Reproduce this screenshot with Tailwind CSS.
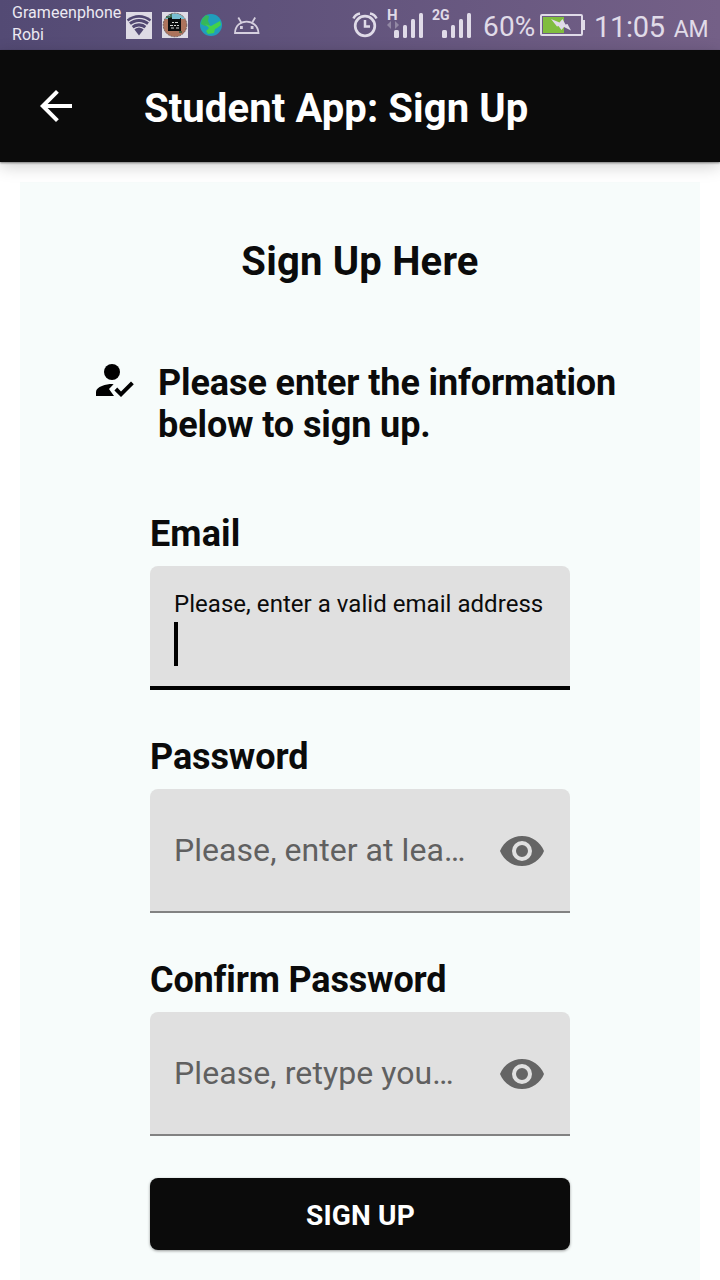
<!DOCTYPE html>
<html lang="en">
<head>
<meta charset="utf-8">
<title>Student App: Sign Up</title>
<script src="https://cdn.jsdelivr.net/npm/@tailwindcss/browser@4"></script>
</head>
<body class="h-[1280px] w-[720px] overflow-hidden bg-white font-['Roboto','Liberation_Sans',sans-serif] text-[#0b0b0b]">
<div class="flex h-full flex-col">
  <!-- Status bar -->
  <div class="flex h-[50px] shrink-0 items-start bg-linear-to-r from-[#534a74] to-[#746087] text-[#e0dbe8]">
    <div class="ml-3 mt-[2px] w-[114px] whitespace-nowrap text-[16px] leading-[22px] tracking-[0.05px] text-[#ece9f2]"><p>Grameenphone</p><p>Robi</p></div>
    <!-- Wi-Fi -->
    <svg class="mt-3 h-[27px] w-[26px] shrink-0" viewBox="0 0 26 27"><path fill="#dedbe5" d="M0 0h26v27H0z"/><path fill="#514872" d="M.8 7.500C8 1.500 18 1.500 25.200 7.500L13 23.500z"/><g fill="none" stroke="#dedbe5" stroke-width="1.300"><path d="M2 10.500c6.500-5.500 15.500-5.500 22 0M4.500 14c5-4.500 12-4.500 17 0M7 17.600c3.600-3.300 8.400-3.300 12 0"/></g></svg>
    <!-- Game -->
    <svg class="ml-[10px] mt-3 size-[26px] shrink-0" viewBox="0 0 26 26"><path fill="#dedbe5" d="M0 0h26v26H0z"/><circle cx="13" cy="13" r="11.800" fill="#ad735c" stroke="#5f514f" stroke-width=".8" stroke-dasharray="2 1"/><path fill="#78bfd2" d="M3 7C7-.5 19-.5 23 7z"/><path fill="#0b0d0e" d="M6 6h2V5h2v2h8V6h1v13H6z"/><path stroke="#d7d8d6" d="M10 10.500h2m1 0h3M8 13.500h3m1 0h2m1 0h2M9 16h3m2 0h3"/><path stroke="#315b36" stroke-width="1.500" d="M4 5h6m-2-2h2m7 17h3"/></svg>
    <!-- Globe -->
    <svg class="ml-3 mt-[14px] size-[22px] shrink-0" viewBox="0 0 22 22"><circle cx="11" cy="11" r="11" fill="#209ebc"/><path fill="#35b75b" d="M2 5 6 1l3 1-1 5 2 4-5 1-4-2z"/><path fill="#43d24a" d="m5 10 6 2 9-5 1 4-4 3-2 1-1 4-6 1-2-3 3-3z"/></svg>
    <!-- Android -->
    <svg class="ml-[11px] mt-4 h-[19px] w-[28px] shrink-0" viewBox="0 0 28 19" fill="none" stroke="#d6d0df" stroke-width="1.800"><path d="M2 17C2.500 1.800 24.500 1.800 25.500 17zM8 6 5.300 1.500M19.500 6l2.700-4.500"/><path fill="#d6d0df" stroke="none" d="M7 10h2.800v3H7zm10.700 0h2.800v3h-2.800z"/></svg>
    <!-- Alarm -->
    <svg class="ml-[91px] mt-3 h-[26px] w-[26px] shrink-0" viewBox="0 0 26 26" fill="none" stroke="#e0dbe8"><circle cx="13" cy="14" r="9.800" stroke-width="2.700"/><path stroke-width="2.500" d="M13 8v6.500h5M1.500 6.500Q3 2.500 8 1.500M24.500 6.500Q23 2.500 18 1.500"/></svg>
    <!-- Signals -->
    <div class="ml-[9px] mt-[8px] w-[37px] shrink-0">
      <div class="h-1 text-[15px] font-bold leading-[14px]">H</div>
      <svg class="h-[27px] w-[37px]" viewBox="0 0 37 27"><path fill="#9288a4" d="m0 13 4-4v8zm12 0-4-4v8z"/><g fill="#e0dbe8"><rect x="7" y="18" width="5" height="8" rx="1.500"/><rect x="16" y="13" width="4" height="13" rx="1.500"/><rect x="24" y="7" width="4" height="19" rx="1.500"/><rect x="32" y="1" width="4" height="25" rx="1.500"/></g></svg>
    </div>
    <div class="ml-[8px] mt-[8px] w-[40px] shrink-0">
      <div class="h-1 text-[14px] font-bold leading-[14px]">2G</div>
      <svg class="h-[27px] w-[40px]" viewBox="0 0 40 27" fill="#e0dbe8"><rect x="10" y="18" width="5" height="8" rx="1.500"/><rect x="19" y="13" width="4" height="13" rx="1.500"/><rect x="27" y="7" width="4" height="19" rx="1.500"/><rect x="35" y="1" width="4" height="25" rx="1.500"/></svg>
    </div>
    <div class="ml-[11px] mt-[10px] w-[57px] shrink-0 whitespace-nowrap text-[28px] font-[370] leading-[34px] tracking-[0.2px]">60%</div>
    <!-- Battery -->
    <svg class="mt-[14px] h-[22px] w-[45px] shrink-0" viewBox="0 0 45 22"><path fill="#80bd3f" d="M3 3h21v16H3z"/><rect x="1" y="1" width="41" height="20" rx="1" fill="none" stroke="#e0dbe8" stroke-width="2"/><path fill="#e0dbe8" d="M42 6h3v10h-3zM11 5l8.500 3.500L22.500 5l3 5.500 2-.5L31 16.500 24 13l-2.500 3-3-4-1.500.5z"/></svg>
    <div class="ml-[9px] mt-[10px] flex shrink-0 items-baseline whitespace-nowrap text-[29px] font-[370] leading-[34px]"><span class="tracking-[-0.3px]">11:05</span><span class="ml-[9px] text-[23px] tracking-[-0.3px]">AM</span></div>
  </div>

  <!-- App bar -->
  <header class="z-10 flex h-[112px] shrink-0 items-center bg-[#0b0b0b] text-white shadow-[0_1px_2px_rgba(0,0,0,0.45),0_4px_16px_rgba(0,0,0,0.2)]">
    <svg class="ml-8 size-12" viewBox="0 0 24 24" fill="white"><path d="M20 11H7.830l5.590-5.590L12 4l-8 8 8 8 1.410-1.410L7.830 13H20v-2z"/></svg>
    <h1 class="ml-16 mt-[5px] whitespace-nowrap text-[40px] font-bold leading-[47px] tracking-[0.1px]">Student App: Sign Up</h1>
  </header>

  <main class="mx-5 mt-5 flex grow flex-col bg-[#f7fcfb] pt-14">
    <h2 class="text-center text-[40px] font-bold leading-[47px] tracking-[0.2px]">Sign Up Here</h2>
    <div class="mt-[77px] flex">
      <svg class="ml-[72px] -mt-[6px] size-12 shrink-0" viewBox="0 0 24 24" fill="black"><circle cx="10" cy="8" r="4"/><path d="M2 20v-2c0-2.700 5.300-4 8-4l.8.1-2.300 2.400L11 20zM14.500 20.500 11.200 17.200l1.400-1.400 1.900 1.900 5-5 1.400 1.400z"/></svg>
      <p class="ml-[18px] whitespace-nowrap text-[36px] font-bold leading-[42px] tracking-[-0.11px]">Please enter the information<br>below to sign up.</p>
    </div>

    <form class="mx-[130px] mt-[67px] flex flex-col">
      <label class="text-[36px] font-bold leading-[42px] tracking-[0.1px]">Email</label>
      <div class="mt-[11px] flex h-[124px] flex-col rounded-t-lg border-b-4 border-black bg-[#e0e0e0] px-6 pt-6">
        <span class="whitespace-nowrap text-[24px] leading-7 tracking-[0.04px]">Please, enter a valid email address</span>
        <span class="mt-1 h-11 w-1 bg-black"></span>
      </div>
      <label class="mt-[46px] text-[36px] font-bold leading-[42px] tracking-[-0.1px]">Password</label>
      <div class="mt-[11px] flex h-[124px] items-center justify-between rounded-t-lg border-b-2 border-[#828282] bg-[#e0e0e0] px-6 text-[#606060]">
        <span class="whitespace-nowrap text-[32px] leading-[38px] tracking-[0.05px]">Please, enter at lea…</span>
        <svg class="mt-[2px] size-12" viewBox="0 0 24 24" fill="#656565"><path d="M12 4.500C7 4.500 2.730 7.610 1 12c1.730 4.390 6 7.500 11 7.500s9.270-3.110 11-7.500c-1.730-4.390-6-7.500-11-7.500zM12 17a5 5 0 1 1 0-10 5 5 0 0 1 0 10zm0-8a3 3 0 1 0 0 6 3 3 0 0 0 0-6z"/></svg>
      </div>
      <label class="mt-[46px] text-[36px] font-bold leading-[42px] tracking-[-0.16px]">Confirm Password</label>
      <div class="mt-[11px] flex h-[124px] items-center justify-between rounded-t-lg border-b-2 border-[#828282] bg-[#e0e0e0] px-6 text-[#606060]">
        <span class="whitespace-nowrap text-[32px] leading-[38px] tracking-[0.08px]">Please, retype you…</span>
        <svg class="mt-[2px] size-12" viewBox="0 0 24 24" fill="#656565"><path d="M12 4.500C7 4.500 2.730 7.610 1 12c1.730 4.390 6 7.500 11 7.500s9.270-3.110 11-7.500c-1.730-4.390-6-7.500-11-7.500zM12 17a5 5 0 1 1 0-10 5 5 0 0 1 0 10zm0-8a3 3 0 1 0 0 6 3 3 0 0 0 0-6z"/></svg>
      </div>
      <button type="button" class="mt-[42px] h-[72px] rounded-lg bg-[#0b0b0b] pl-px pt-[3px] text-[28px] font-bold leading-8 tracking-[0.15px] text-white shadow-[0_1px_3px_rgba(0,0,0,0.4)]">SIGN UP</button>
    </form>
  </main>
</div>
</body>
</html>
